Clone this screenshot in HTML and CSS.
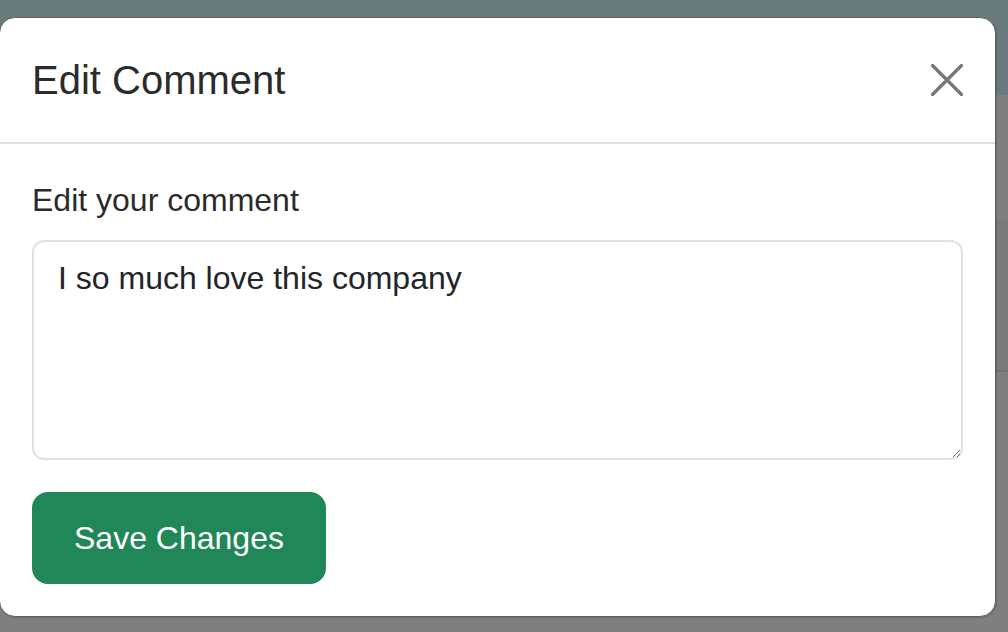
FILE: index.html
```html
<!DOCTYPE html>
<html>
<head>
<meta charset="utf-8">
<link rel="stylesheet" href="styles.css">
</head>
<body>
<div class="page">
  <div class="topbar"></div>
  <div class="band band-a"></div>
  <div class="band band-b"></div>
  <div class="band band-c"></div>
</div>
<div class="modal">
  <div class="modal-header">
    <h5 class="modal-title">Edit Comment</h5>
    <button class="btn-close" aria-label="Close">
      <svg width="32" height="32" viewBox="0 0 32 32"><path d="M1.5 1.5 L30.5 30.5 M30.5 1.5 L1.5 30.5" stroke="#767676" stroke-width="3.2" stroke-linecap="round" fill="none"/></svg>
    </button>
  </div>
  <div class="modal-body">
    <label class="form-label" for="c">Edit your comment</label>
    <textarea id="c" class="form-control">I so much love this company</textarea>
    <button class="btn-save">Save Changes</button>
  </div>
</div>
</body>
</html>
```
FILE: styles.css
```css
html, body {
  margin: 0;
  padding: 0;
  height: 100%;
  overflow: hidden;
}
body {
  background: #7f7f7f;
  font-family: "Liberation Sans", Arial, sans-serif;
  color: #212529;
}
.page {
  display: flex;
  flex-direction: column;
}
.topbar {
  height: 96px;
  background: #687a7c;
  border-bottom: 1px solid #6f8587;
  box-sizing: border-box;
}
.band-a { height: 124px; background: #7f7f7f; }
.band-b { height: 150px; background: #7a7a7a; border-bottom: 2px solid #727272; }
.band-c { height: 260px; background: #7f7f7f; }

.modal {
  position: absolute;
  left: -1px;
  top: 17px;
  width: 997px;
  box-sizing: border-box;
  background: #fff;
  border: 1px solid #5f5f5f;
  border-radius: 16px;
  box-shadow: 1px 1px 1px rgba(0,0,0,0.15);
}
.modal-header {
  display: flex;
  align-items: center;
  justify-content: space-between;
  padding: 32px;
  border-bottom: 2px solid #dee2e6;
}
.modal-title {
  margin: 0;
  font-size: 40px;
  line-height: 60px;
  font-weight: 400;
  color: #2b2b2b;
}
.btn-close {
  border: 0;
  background: transparent;
  padding: 0;
  width: 32px;
  height: 32px;
  display: flex;
}
.modal-body {
  padding: 32px;
  display: flex;
  flex-direction: column;
  align-items: flex-start;
}
.form-label {
  font-size: 32px;
  line-height: 48px;
  margin-bottom: 16px;
  color: #2b2b2b;
}
.form-control {
  width: 100%;
  height: 220px;
  box-sizing: border-box;
  border: 2px solid #dee2e6;
  border-radius: 12px;
  padding: 12px 24px;
  font-family: "Liberation Sans", Arial, sans-serif;
  font-size: 32px;
  line-height: 48px;
  color: #212529;
  margin: 0 0 32px 0;
  resize: vertical;
  outline: none;
}
.btn-save {
  background: #218759;
  color: #fff;
  border: 2px solid #218759;
  border-radius: 16px;
  padding: 20px 40px;
  font-family: "Liberation Sans", Arial, sans-serif;
  font-size: 32px;
  line-height: 48px;
  cursor: pointer;
}
```
